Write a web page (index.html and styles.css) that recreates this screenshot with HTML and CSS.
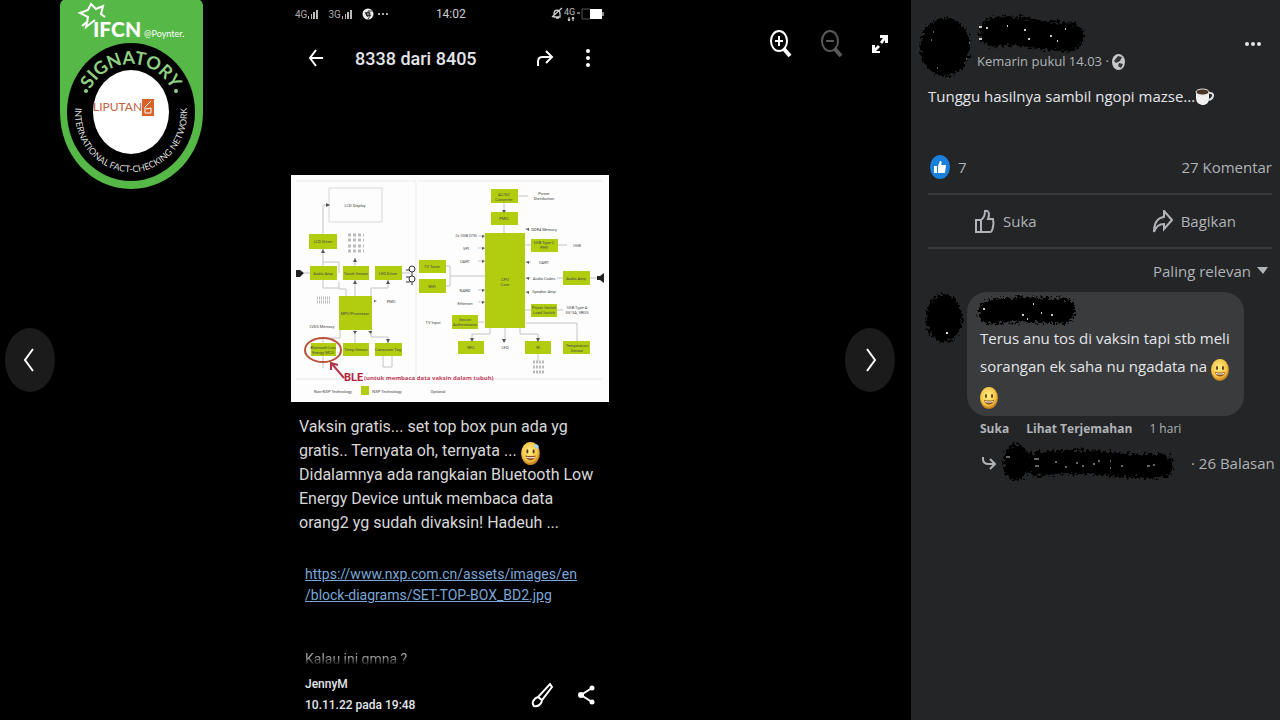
FILE: index.html
```html
<!DOCTYPE html>
<html lang="id">
<head>
    <meta charset="UTF-8">
    <meta name="viewport" content="width=device-width, initial-scale=1.0">
    <title>Foto</title>
    <link rel="stylesheet" href="styles.css">
</head>
<body>

    <!-- shared shapes -->
    <svg class="defs" width="0" height="0" aria-hidden="true">
        <defs>
            <filter id="rough" filterUnits="userSpaceOnUse" x="-10" y="-10" width="220" height="90">
                <feTurbulence type="fractalNoise" baseFrequency="0.35" numOctaves="2" seed="4" result="n"/>
                <feDisplacementMap in="SourceGraphic" in2="n" scale="11" xChannelSelector="R" yChannelSelector="G"/>
            </filter>
            <radialGradient id="skin" cx="45%" cy="40%" r="60%">
                <stop offset="0" stop-color="#ffee8a"/>
                <stop offset="0.7" stop-color="#f6c444"/>
                <stop offset="1" stop-color="#b9711c"/>
            </radialGradient>
            <symbol id="smile" viewBox="0 0 18 22">
                <ellipse cx="9" cy="11" rx="9" ry="11" fill="url(#skin)"/>
                <ellipse cx="6" cy="9" rx="1" ry="2" fill="#5a3a12"/>
                <ellipse cx="12" cy="9" rx="1" ry="2" fill="#5a3a12"/>
                <path d="M4 13q5 1 10 0c-1 6-9 6-10 0z" fill="#8a5218"/>
                <path d="M5 14q4 1 8 0v1q-4 1-8 0z" fill="#fff"/>
            </symbol>
        </defs>
    </svg>

    <main class="viewer">
        <div class="side side-left">
            <svg class="badge" width="143" height="189" viewBox="0 0 143 189" role="img" aria-label="IFCN Signatory">
                <path d="M3 0h137q3 2 3 6v106c0 43-32 77-72 77S0 155 0 112V6q0-4 3-6z" fill="#56b847"/>
                <ellipse cx="71" cy="112" rx="64" ry="69" fill="#000"/>
                <ellipse cx="71" cy="112" rx="38" ry="42" fill="#fff"/>
                <path d="M35 20l-9 7 2-10-8-4 8-3 3-6 5 5 7-3-2 8 4 3" fill="none" stroke="#fff" stroke-width="2"/>
                <path d="M22 26l6-5" stroke="#fff" stroke-width="2"/>
                <text class="badge-ifcn" x="33" y="37">IFCN</text>
                <text class="badge-poynter" x="84" y="37">@Poynter.</text>
                <path id="arcTop" d="M25 112A46 48 0 0 1 117 112" fill="none"/>
                <path id="arcBottom" d="M16 102A56 59 0 1 0 126 102" fill="none"/>
                <text class="badge-top" text-anchor="middle"><textPath href="#arcTop" startOffset="50%">SIGNATORY</textPath></text>
                <text class="badge-bottom" text-anchor="middle"><textPath href="#arcBottom" startOffset="50%">INTERNATIONAL FACT-CHECKING NETWORK</textPath></text>
                <circle cx="26" cy="91" r="2" fill="#8fd083"/>
                <circle cx="116" cy="91" r="2" fill="#8fd083"/>
                <text class="badge-name" x="33" y="111">LIPUTAN</text>
                <path d="M82 99h12v17H82z" fill="#d9622b"/>
                <path d="M91 101l-6 6v6h6v-5l-5 1" fill="none" stroke="#fff"/>
            </svg>
            <button class="nav" type="button" aria-label="Sebelumnya">
                <svg width="16" height="28" viewBox="0 0 16 28"><path d="M11 3L3 14l8 11"/></svg>
            </button>
        </div>

        <section class="phone">
            <div class="status">
                <span class="net">4G</span>
                <svg width="12" height="10" viewBox="0 0 12 10"><path d="M1 10V7h1v3zM4 10V5h1v5zM6 10V3h2v7zM9 10V1h2v9z" fill="#bbb"/></svg>
                <span class="net net-2">3G</span>
                <svg width="12" height="10" viewBox="0 0 12 10"><path d="M1 10V7h1v3zM4 10V5h1v5zM6 10V3h2v7zM9 10V1h2v9z" fill="#bbb"/></svg>
                <svg class="chrome" width="30" height="12" viewBox="0 0 30 12">
                    <circle cx="6" cy="6" r="5.5" fill="#eee"/>
                    <path d="M6 3h5M3 4l3 5M9 7l-3 4" stroke="#333"/>
                    <circle cx="6" cy="6" r="2" fill="#777" stroke="#111"/>
                    <path d="M16 6h2M20 6h2M24 6h2" stroke="#aaa" stroke-width="2"/>
                </svg>
                <span class="clock">14:02</span>
                <svg class="battery" width="54" height="16" viewBox="0 0 54 16">
                    <path d="M3 11V8c0-5 6-5 6 0v3zM1 11l10-9M5 12h3" fill="none" stroke="#ccc" stroke-width="1.3"/>
                    <text class="tiny-net" x="13" y="9">4G</text>
                    <path d="M18 11v4M17 13l1 2 1-2M22 15v-4M21 13l1-2 1 2M26 7h3" fill="none" stroke="#ddd"/>
                    <path d="M39 3h-8v10h8" fill="none" stroke="#555"/>
                    <path d="M39 3h12v10H39z" fill="#fff"/>
                    <path d="M51 6h2v4h-2z" fill="#888"/>
                </svg>
            </div>

            <header class="appbar">
                <button class="icon" type="button" aria-label="Kembali">
                    <svg width="16" height="20" viewBox="0 0 16 20"><path d="M15 10H2M8 2l-6 8 6 8"/></svg>
                </button>
                <h1>8338 dari 8405</h1>
                <button class="icon" type="button" aria-label="Teruskan">
                    <svg width="18" height="20" viewBox="0 0 18 20"><path d="M2 18v-4c0-3 1-5 4-5h10M10 3l6 6-6 6"/></svg>
                </button>
                <button class="icon" type="button" aria-label="Menu">
                    <svg width="6" height="20" viewBox="0 0 6 20"><g fill="#fff" stroke="none"><circle cx="3" cy="3" r="2"/><circle cx="3" cy="10" r="2"/><circle cx="3" cy="17" r="2"/></g></svg>
                </button>
            </header>

            <svg class="diagram" viewBox="291 175 318 227" role="img" aria-label="Diagram blok set top box">
                <path d="M291 175h318v227H291z" fill="#fdfdfd"/>
                <g fill="none" stroke="#e9e9e9">
                    <path d="M296 181h120M416 181v198M296 379h120M418 181h184M478 379h124"/>
                    <path d="M329 188h53v34h-53z" stroke="#d8d8d8"/>
                </g>
                <g fill="none" stroke="#c4c4c4">
                    <path d="M323 234v-29h7M323 249v13h16v11M323 266v-4M339 282v7h7v7M323 280v8h16M355 296v-16M371 296v-8h17v-8M355 266v-8M323 343v-5h17v-8M355 343v-13M371 330v7h17v6M383 356v11h9v-11M323 356v12M304 273h6M402 273h8M518 196h10M504 203v9M504 225v8M446 266h4v20h-4M450 276h35M478 236h6M478 248h6M478 261h6M478 290h6M478 302h6M478 322h6M525 229h4M525 245h6M525 262h6M525 278h6M557 278h6M525 292h4M525 310h6M557 245h10M557 310h6M589 278h8M490 328v6h-18v8M505 328v14M520 328v6h18v8M526 323h51v19M538 354v7"/>
                </g>
                <g fill="#b2cd10">
                    <path d="M309 234h28v15h-28zM310 266h27v14h-27zM343 266h26v14h-26zM375 266h27v14h-27zM339 296h33v34h-33zM311 343h25v13h-25zM343 343h26v13h-26zM375 343h27v13h-27zM361 386h8v9h-8z"/>
                    <path d="M485 233h40v95h-40zM491 189h27v14h-27zM491 212h27v13h-27zM419 260h27v13h-27zM419 279h27v14h-27zM531 239h27v13h-27zM563 271h27v14h-27zM531 304h26v13h-26zM452 315h26v14h-26zM458 341h26v13h-26zM525 341h26v13h-26zM563 341h27v13h-27z"/>
                </g>
                <g fill="#555">
                    <path d="M326 203l4 2-4 2zM321 253l2-4 2 4zM353 262l2-4 2 4zM353 284l2-4 2 4zM386 284l2-4 2 4zM353 331h4l-2 3zM368 331h4l-1 3zM386 339h4l-2 4zM502 210h4l-2 3zM502 339h4l-2 4zM470 338h4l-2 4zM536 338h4l-2 4zM482 235l3 1-3 2zM482 247l3 1-3 2zM482 260l3 1-3 2zM482 289l3 1-3 2zM482 301l3 1-3 2zM529 228l-3 1 3 2zM529 261l-3 1 3 2zM529 277l-3 1 3 2zM529 291l-3 1 3 2zM374 300l3 1-3 1z"/>
                    <path d="M296 270h4l4 3-4 4h-4zM597 276h3l4-3v10l-4-3h-3z" fill="#222"/>
                    <path d="M406 270h4M406 277h4M406 282h4" stroke="#333"/>
                    <circle cx="412" cy="269" r="3" fill="none" stroke="#333"/>
                    <circle cx="412" cy="279" r="3" fill="none" stroke="#333"/>
                    <path d="M412 272v4M412 282v3" stroke="#333"/>
                </g>
                <g fill="none" stroke="#bbb" stroke-dasharray="3 2" stroke-width="3">
                    <path d="M348 235h16M348 240h16M348 246h16M348 251h16"/>
                    <path d="M317 298h13M317 302h13" stroke-dasharray="1 1"/>
                    <path d="M533 362h12M533 367h12M533 372h12" stroke-dasharray="2 1"/>
                </g>
                <g class="label">
                    <text x="355" y="207">LCD Display</text>
                    <text x="323" y="243">LCD Driver</text>
                    <text x="323" y="275">Audio Amp</text>
                    <text x="356" y="275">Touch Sensor</text>
                    <text x="388" y="275">LED Driver</text>
                    <text x="355" y="315">MPU/Processor</text>
                    <text x="391" y="303">PMU</text>
                    <text x="322" y="328">LVDS Memory</text>
                    <text x="323" y="349">Bluetooth Low</text>
                    <text x="323" y="354">Energy MCU</text>
                    <text x="356" y="351">Temp Sensor</text>
                    <text x="388" y="351">Consumer Tag</text>
                    <text x="333" y="393">Non-NXP Technology</text>
                    <text x="387" y="393">NXP Technology</text>
                    <text x="438" y="393">Optional</text>
                    <text x="504" y="196">AC/DC</text>
                    <text x="504" y="201">Converter</text>
                    <text x="504" y="220">PMIC</text>
                    <text x="544" y="195">Power</text>
                    <text x="544" y="200">Distribution</text>
                    <text x="466" y="237">2x USB OTG</text>
                    <text x="466" y="250">SPI</text>
                    <text x="465" y="263">UART</text>
                    <text x="465" y="292">NAND</text>
                    <text x="465" y="305">Ethernet</text>
                    <text x="432" y="268">TV Tuner</text>
                    <text x="432" y="288">WiFi</text>
                    <text x="433" y="324">TV Input</text>
                    <text x="465" y="321">Secure</text>
                    <text x="465" y="326">Authenticator</text>
                    <text x="505" y="281">CPU</text>
                    <text x="505" y="286">Core</text>
                    <text x="544" y="231">DDR4 Memory</text>
                    <text x="544" y="244">USB Type-C</text>
                    <text x="544" y="249">PHY</text>
                    <text x="577" y="247">USB</text>
                    <text x="544" y="264">UART</text>
                    <text x="544" y="280">Audio Codec</text>
                    <text x="576" y="280">Audio Amp</text>
                    <text x="544" y="293">Speaker Amp</text>
                    <text x="544" y="309">Power Switch</text>
                    <text x="544" y="314">Load Switch</text>
                    <text x="577" y="309">USB Type-A</text>
                    <text x="577" y="314">5V/3A, VBUS</text>
                    <text x="471" y="349">NFC</text>
                    <text x="505" y="349">LED</text>
                    <text x="538" y="349">IR</text>
                    <text x="577" y="347">Temperature</text>
                    <text x="577" y="352">Sensor</text>
                </g>
                <ellipse cx="323" cy="350" rx="18" ry="12" fill="none" stroke="#b8523a" stroke-width="2"/>
                <path d="M344 378l-12-14M331 370v-7l7 2" fill="none" stroke="#b3374b" stroke-width="2"/>
                <text class="ble" x="344" y="381">BLE</text>
                <text class="ble-note" x="364" y="380">(untuk membaca data vaksin dalam tubuh)</text>
            </svg>

            <p class="caption">
                Vaksin gratis... set top box pun ada yg<br>
                gratis.. Ternyata oh, ternyata ... <svg class="emoji" width="19" height="23"><use href="#smile"/><path d="M14 2c4 0 5 4 2 5-3-1-3-3-2-5z" fill="#a5d4ee"/></svg><br>
                Didalamnya ada rangkaian Bluetooth Low<br>
                Energy Device untuk membaca data<br>
                orang2 yg sudah divaksin! Hadeuh ...
            </p>
            <p class="link"><a href="#">https://www.nxp.com.cn/assets/images/en<br>/block-diagrams/SET-TOP-BOX_BD2.jpg</a></p>
            <p class="more">Kalau ini gmna ?</p>

            <footer class="sender">
                <p>JennyM<br>10.11.22 pada 19:48</p>
                <button class="icon" type="button" aria-label="Edit">
                    <svg width="22" height="26" viewBox="0 0 22 26"><path d="M19 2l2 3-10 13-4-3zM7 15l4 3c0 4-4 7-8 6-3-3 0-8 4-9z"/></svg>
                </button>
                <button class="icon" type="button" aria-label="Bagikan foto">
                    <svg width="17" height="22" viewBox="0 0 17 22"><path d="M14 4L3 11l11 7"/><g fill="#fff" stroke="none"><circle cx="14" cy="4" r="2.5"/><circle cx="3" cy="11" r="3"/><circle cx="14" cy="18" r="2.5"/></g></svg>
                </button>
            </footer>
        </section>

        <div class="side side-right">
            <div class="tools">
                <button class="icon" type="button" aria-label="Perbesar">
                    <svg width="24" height="30" viewBox="0 0 24 30"><ellipse cx="10" cy="12" rx="8" ry="10"/><path d="M10 7v10M6 12h8"/><path d="M15 20l6 7" stroke-width="4"/></svg>
                </button>
                <button class="icon" type="button" aria-label="Perkecil" disabled>
                    <svg width="24" height="30" viewBox="0 0 24 30"><ellipse cx="10" cy="12" rx="8" ry="10"/><path d="M6 12h8"/><path d="M15 20l6 7" stroke-width="4"/></svg>
                </button>
                <button class="icon" type="button" aria-label="Layar penuh">
                    <svg width="18" height="20" viewBox="0 0 18 20"><path d="M9 1h8v8h-3V6l-3 4-2-2 3-4H9zM1 11h3v3l3-3 2 2-4 4h4v2H1z" fill="#fff" stroke="none"/></svg>
                </button>
            </div>
            <button class="nav" type="button" aria-label="Berikutnya">
                <svg width="16" height="28" viewBox="0 0 16 28"><path d="M5 3l8 11-8 11"/></svg>
            </button>
        </div>
    </main>

    <aside class="panel">
        <header class="author">
            <svg width="54" height="62" viewBox="0 0 54 62" aria-hidden="true">
                <ellipse cx="26" cy="31" rx="25" ry="29" fill="#000" filter="url(#rough)"/>
                <path d="M14 16h1M12 24h1M18 52h1M47 43h1M50 27h1" stroke="#bbb"/>
            </svg>
            <div class="author-info">
                <svg width="110" height="40" viewBox="0 0 110 40" aria-hidden="true">
                    <path d="M17 18Q30 15 52 19T92 23" fill="none" stroke="#000" stroke-width="29" stroke-linecap="round" filter="url(#rough)"/>
                    <path d="M2 13h3M2 25h3M9 14h2M47 16h2M51 25h2M73 22h2M30 12h1M88 15h1M80 27h1" stroke="#ccc" stroke-width="2"/>
                </svg>
                <p class="meta">Kemarin pukul 14.03 · <svg width="13" height="16" viewBox="0 0 13 16"><ellipse cx="6.5" cy="8" rx="6.5" ry="8" fill="#c5c7ca"/><path d="M6 2l4 1-2 4-4 2-2-2zM7 9l4 1-2 4-3-2z" fill="#343638"/></svg></p>
            </div>
            <button class="icon" type="button" aria-label="Lainnya">
                <svg width="18" height="6" viewBox="0 0 18 6"><g fill="#e4e6eb" stroke="none"><circle cx="3" cy="3" r="2"/><circle cx="9" cy="3" r="2"/><circle cx="15" cy="3" r="2"/></g></svg>
            </button>
        </header>

        <p class="post">Tunggu hasilnya sambil ngopi mazse...<svg width="19" height="18" viewBox="0 0 19 18"><path d="M1 4h13v6c0 5-3 7-6 7s-7-2-7-7z" fill="#f1f1f1"/><ellipse cx="7.5" cy="4" rx="6.5" ry="3" fill="#4c3327" stroke="#ddd"/><path d="M14 5c6-1 5 6-1 7" fill="none" stroke="#ddd" stroke-width="2"/></svg></p>

        <div class="counts">
            <svg width="20" height="24" viewBox="0 0 20 24"><ellipse cx="10" cy="12" rx="10" ry="12" fill="#1b7fdc"/><path d="M4 11h3v7H4zM8 11l2-5c2 0 2 2 1 4h5l-1 8H8z" fill="#fff"/></svg>
            <span>7</span>
            <span class="comments-count">27 Komentar</span>
        </div>

        <div class="actions">
            <button type="button">
                <svg width="20" height="25" viewBox="0 0 20 25"><path d="M1 11h5v12H1zM6 11c3-2 4-4 4-9 4-1 5 3 3 8h5c1 4 0 13-3 13H6"/></svg>
                Suka
            </button>
            <button type="button">
                <svg width="20" height="23" viewBox="0 0 20 23"><path d="M11 1l8 9-8 9v-5c-5 0-8 2-10 8 0-9 3-14 10-15z"/></svg>
                Bagikan
            </button>
        </div>

        <div class="sort">
            <select aria-label="Urutkan komentar"><option>Paling relevan</option></select>
            <svg width="11" height="7" viewBox="0 0 11 7"><path d="M0 0h11L6 7z" fill="#b0b3b8"/></svg>
        </div>

        <article class="comment">
            <svg width="40" height="52" viewBox="0 0 40 52" aria-hidden="true">
                <ellipse cx="19" cy="26" rx="18" ry="24" fill="#000" filter="url(#rough)"/>
                <path d="M21 41h2" stroke="#ddd" stroke-width="2"/>
            </svg>
            <div class="comment-body">
                <div class="bubble">
                    <svg width="106" height="32" viewBox="0 0 106 32" aria-hidden="true">
                        <path d="M16 17Q40 13 88 16" fill="none" stroke="#000" stroke-width="25" stroke-linecap="round" filter="url(#rough)"/>
                        <path d="M8 14h2M47 20h2M66 18h1M76 20h2M58 9h1M52 24h1" stroke="#ccc" stroke-width="2"/>
                    </svg>
                    <p>Terus anu tos di vaksin tapi stb meli<br>sorangan ek saha nu ngadata na <svg class="emoji" width="18" height="22"><use href="#smile"/></svg><br><svg class="emoji" width="18" height="22"><use href="#smile"/></svg></p>
                </div>
                <div class="comment-links">
                    <a href="#">Suka</a>
                    <a href="#">Lihat Terjemahan</a>
                    <span>1 hari</span>
                </div>
                <div class="replies">
                    <svg width="16" height="16" viewBox="0 0 16 16"><path d="M2 2v2c0 4 3 5 6 5h5M9 4l5 5-5 5" fill="none" stroke="#b0b3b8" stroke-width="2"/></svg>
                    <svg class="scribble" width="178" height="42" viewBox="0 0 178 42" aria-hidden="true">
                        <g filter="url(#rough)">
                            <ellipse cx="15" cy="20" rx="13" ry="18"/>
                            <path d="M36 22q50-5 90 2h34" fill="none" stroke="#000" stroke-width="24" stroke-linecap="round"/>
                        </g>
                        <path d="M5 15h4M33 17h5M34 24h4M54 20h2M64 25h2M75 21h2M81 24h2M92 22h2M97 19h2M109 19h1M109 26h1M120 24h2M146 24h3M152 23h2" stroke="#ccc"/>
                    </svg>
                    <a href="#">· 26 Balasan</a>
                </div>
            </div>
        </article>
    </aside>

</body>
</html>
```
FILE: styles.css
```css
* {
    box-sizing: border-box;
}
body {
    margin: 0;
    display: flex;
    min-height: 100vh;
    background-color: #000;
    color: #e4e6eb;
    font-family: "Open Sans", "Noto Sans", sans-serif;
}
h1, p {
    margin: 0;
}
a {
    color: inherit;
    text-decoration: none;
}
button {
    padding: 0;
    border: none;
    background: none;
    color: inherit;
    font: inherit;
    cursor: pointer;
}
svg {
    flex-shrink: 0;
}
.defs {
    position: absolute;
}
.icon {
    display: flex;
}
.icon svg,
.nav svg,
.actions svg {
    fill: none;
    stroke: #fff;
    stroke-width: 2;
}

/* photo viewer */
.viewer {
    flex: 1;
    display: grid;
    grid-template-columns: 291fr 318px 302fr;
}
.side {
    position: relative;
    display: flex;
    align-items: center;
    padding: 0 5px;
}
.side-right {
    justify-content: flex-end;
    padding-right: 16px;
}
.badge {
    position: absolute;
    top: 0;
    left: 60px;
}
.badge text {
    font-family: Lato, sans-serif;
    fill: #fff;
}
.badge .badge-ifcn {
    font-size: 21px;
    font-weight: 900;
}
.badge .badge-poynter {
    font-size: 9px;
}
.badge .badge-top {
    font-size: 18px;
    font-weight: bold;
    fill: #8fd083;
}
.badge .badge-bottom {
    font-size: 9px;
    fill: #ddd;
}
.badge .badge-name {
    font-size: 12px;
    fill: #c0603c;
}
.nav {
    display: flex;
    align-items: center;
    justify-content: center;
    width: 50px;
    height: 64px;
    border-radius: 50%;
    background-color: #1b1b1b;
}
.tools {
    position: absolute;
    top: 29px;
    right: 22px;
    display: flex;
    align-items: center;
    gap: 27px;
}
.tools button:disabled {
    opacity: 0.35;
}

/* phone screenshot */
.phone {
    display: flex;
    flex-direction: column;
    font-family: Roboto, sans-serif;
    white-space: nowrap;
}
.status {
    display: flex;
    align-items: center;
    height: 28px;
    padding: 0 4px;
    font-size: 12px;
    color: #ccc;
}
.net {
    font-size: 10px;
    color: #aaa;
}
.net-2 {
    margin-left: 9px;
}
.chrome {
    margin-left: 9px;
}
.clock {
    margin-left: 44px;
}
.battery {
    margin-left: auto;
}
.tiny-net {
    font-size: 9px;
    fill: #bbb;
}
.appbar {
    display: flex;
    align-items: center;
    height: 60px;
    padding: 0 18px 0 17px;
}
.appbar h1 {
    margin: 0 auto 0 31px;
    font-size: 18px;
    font-weight: 500;
}
.appbar .icon + .icon {
    margin-left: 31px;
}
.diagram {
    display: block;
    width: 100%;
    margin-top: 87px;
}
.label {
    font-size: 4px;
    text-anchor: middle;
    fill: #444;
}
.ble {
    font-size: 11px;
    font-weight: bold;
    fill: #b3203c;
}
.ble-note {
    font-family: "Open Sans", sans-serif;
    font-size: 6px;
    font-weight: bold;
    fill: #c0405c;
}
.caption {
    padding: 13px 8px 0;
    font-size: 16px;
    line-height: 24px;
    color: #d8d8d8;
}
.emoji {
    vertical-align: -5px;
    margin: -4px 0;
}
.link {
    padding: 29px 14px 0;
    font-size: 14px;
    line-height: 21px;
    color: #7ba6d6;
}
.link a {
    text-decoration: underline;
}
.more {
    margin: 43px 14px 0;
    font-size: 14px;
    line-height: 20px;
    color: #a0a0a0;
    mask-image: linear-gradient(#000 40%, transparent 85%);
}
.sender {
    display: flex;
    align-items: center;
    padding: 5px 14px 2px;
    font-size: 12px;
    font-weight: 500;
    line-height: 21px;
}
.sender p {
    margin-right: auto;
}
.sender .icon + .icon {
    margin-left: 25px;
}

/* post and comments */
.panel {
    width: 369px;
    padding: 14px 8px 0 17px;
    background-color: #242526;
    white-space: nowrap;
}
.author {
    display: flex;
    align-items: flex-start;
    margin-left: -9px;
}
.author > svg {
    margin-top: 2px;
}
.author-info {
    margin-left: 4px;
}
.author-info svg {
    display: block;
}
.meta {
    margin-top: -3px;
    font-size: 13px;
    line-height: 20px;
    color: #b0b3b8;
}
.author svg,
.bubble > svg,
.scribble {
    overflow: visible;
}
.meta svg {
    display: inline;
    vertical-align: -4px;
}
.author .icon {
    margin: 27px 10px 0 auto;
}
.post {
    margin-top: 6px;
    font-size: 15px;
    line-height: 24px;
}
.post svg {
    vertical-align: -4px;
}
.counts {
    display: flex;
    align-items: center;
    gap: 8px;
    margin-top: 47px;
    padding-left: 2px;
    font-size: 15px;
    line-height: 24px;
    color: #b0b3b8;
}
.comments-count {
    margin-left: auto;
}
.actions {
    display: flex;
    justify-content: space-between;
    height: 56px;
    margin-top: 14px;
    padding: 0 36px 0 47px;
    border-top: 2px solid #3a3b3c;
    border-bottom: 2px solid #3a3b3c;
    font-size: 15px;
    font-weight: 500;
    color: #b0b3b8;
}
.actions button {
    display: flex;
    align-items: center;
    gap: 8px;
}
.actions svg {
    stroke: #b0b3b8;
}
.sort {
    display: flex;
    align-items: center;
    justify-content: flex-end;
    gap: 6px;
    height: 43px;
    padding-right: 4px;
    color: #b0b3b8;
}
.sort select {
    appearance: none;
    padding: 0;
    border: none;
    background: none;
    color: inherit;
    font-family: inherit;
    font-size: 15px;
    font-weight: 500;
}
.comment {
    display: flex;
    align-items: flex-start;
    margin-left: -3px;
}
.comment-body {
    flex: 1;
    margin-left: 2px;
}
.bubble {
    width: 277px;
    padding: 3px 0 8px 13px;
    border-radius: 20px;
    background-color: #3a3b3c;
    font-size: 15px;
    line-height: 28px;
}
.bubble > svg {
    display: block;
    margin: 0 0 -3px -5px;
}
.comment-links {
    display: flex;
    gap: 17px;
    padding-left: 13px;
    font-size: 12px;
    line-height: 26px;
    color: #b0b3b8;
}
.comment-links a {
    font-weight: bold;
}
.replies {
    display: flex;
    align-items: center;
    padding-left: 14px;
    font-size: 15px;
    color: #b0b3b8;
}
.replies .scribble {
    margin: 0 12px 0 4px;
}
```
